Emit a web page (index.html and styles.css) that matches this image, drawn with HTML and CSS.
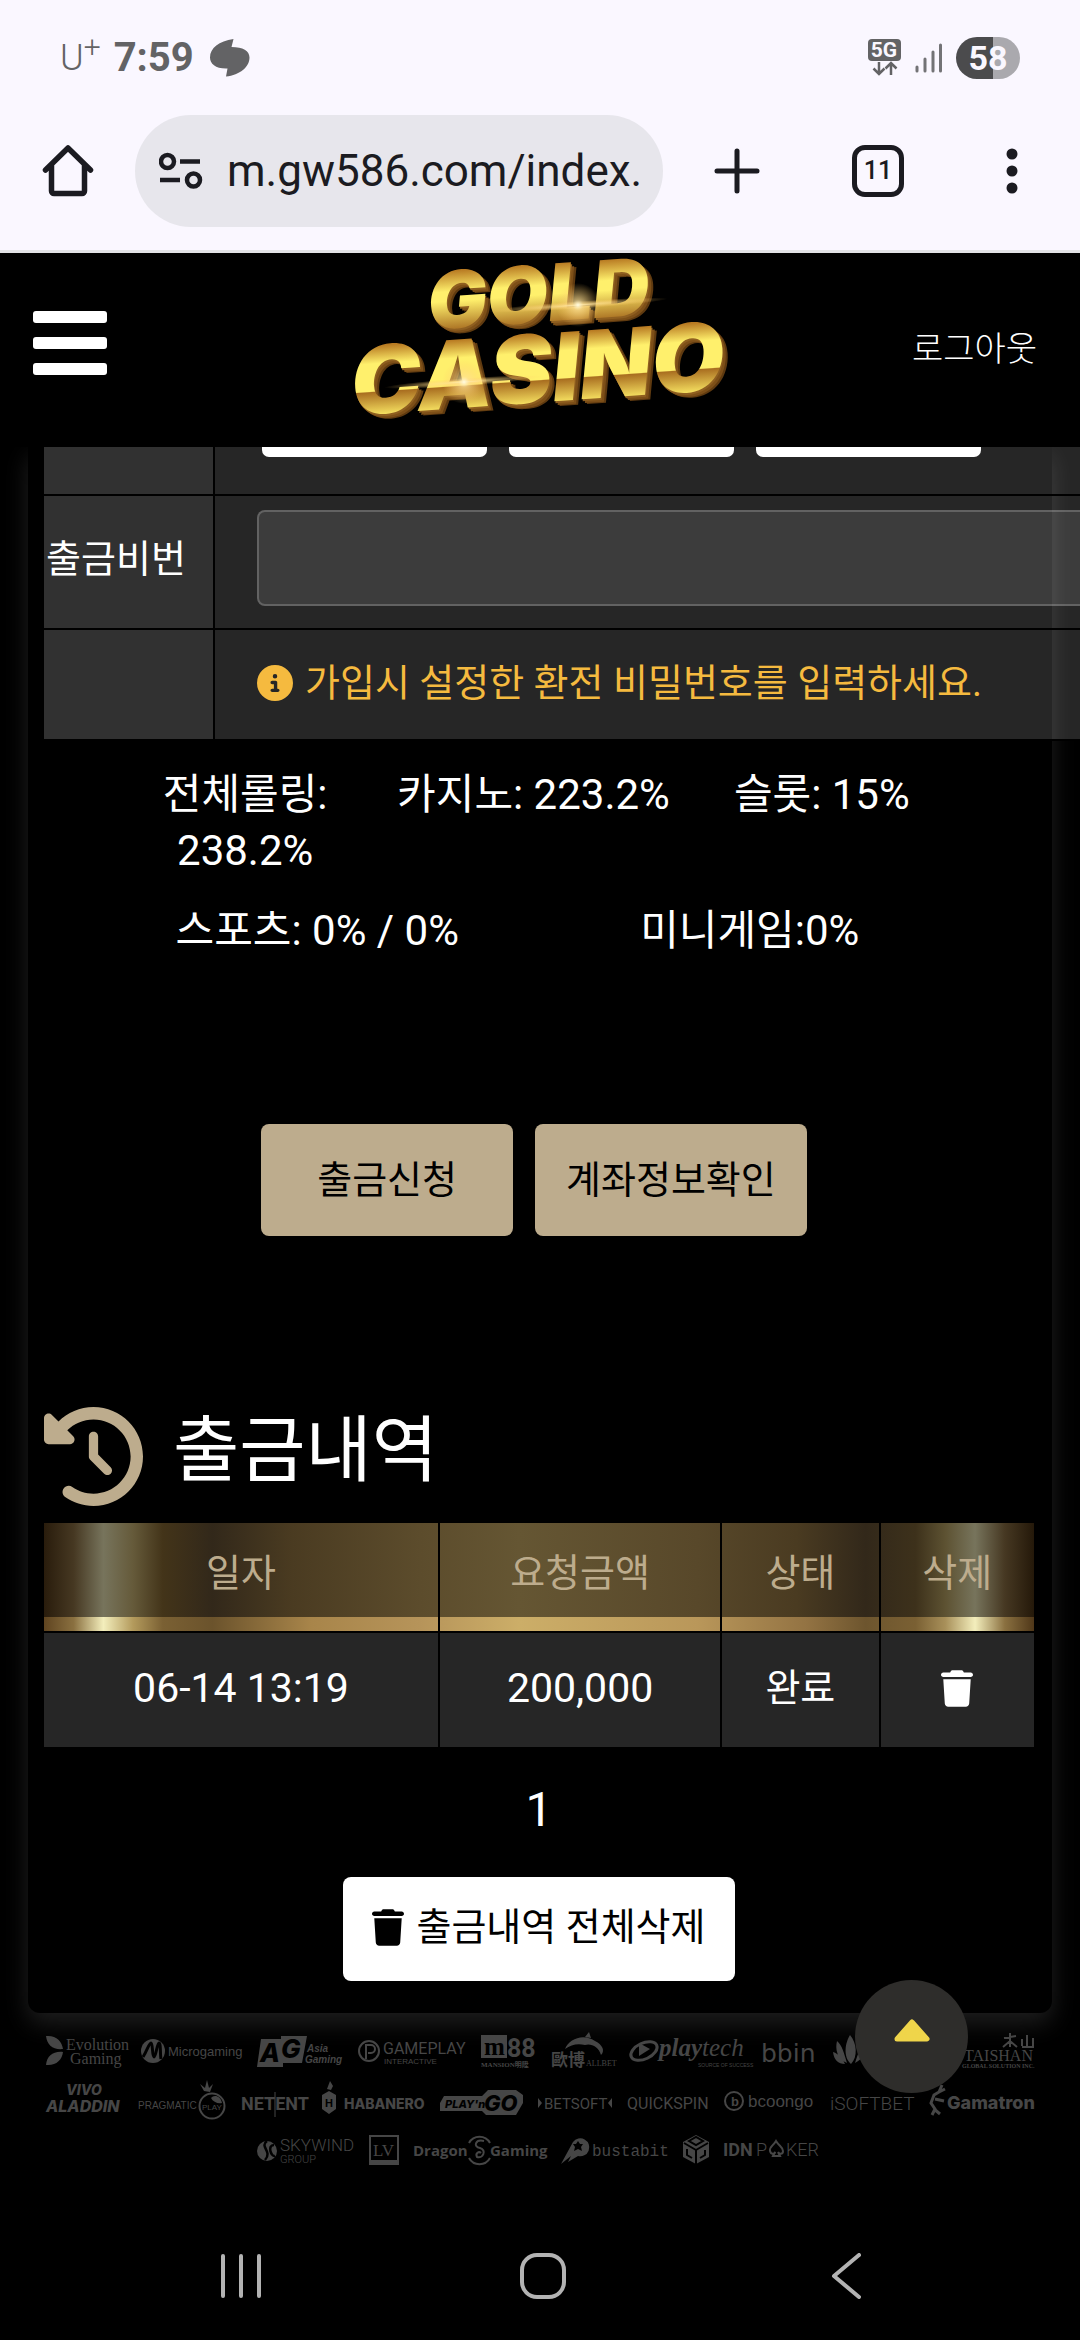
FILE: index.html
```html
<!DOCTYPE html>
<html lang="ko">
<head>
    <meta charset="UTF-8">
    <meta name="viewport" content="width=device-width, initial-scale=1.0">
    <title>GOLD CASINO</title>
    <link rel="stylesheet" href="styles.css">
</head>
<body>
    <!-- Status bar -->
    <div class="status-bar">
        <span class="carrier">U<sup>+</sup></span>
        <span class="clock">7:59</span>
        <svg class="status-app" width="40" height="38" viewBox="0 0 40 38"><path fill="#636365" d="M23.500 0L21.500 8C33 8 39.500 12 39.500 18.500C39.500 28 30 36 16 37.500L17.500 29.500C6 30 0 25 0 18.500C0 9 9 2 23.500 0Z"/></svg>
        <div class="status-right">
            <svg width="34" height="38" viewBox="0 0 34 38">
                <rect width="33" height="22" rx="4" fill="#636365"/>
                <text x="16" y="18" text-anchor="middle" class="net-label">5G</text>
                <path d="M11 23v12M5.500 29.500l5.500 5.500 5.500-5.500M23 36V24M17.500 29.500l5.500-5.500 5.500 5.500" fill="none" stroke="#636365" stroke-width="2.500"/>
            </svg>
            <svg width="28" height="30" viewBox="0 0 28 30"><path d="M2 24v4M10 16v12M18 9v19M25.500 2v26" stroke="#737376" stroke-width="3" stroke-linecap="round"/></svg>
            <span class="battery">58</span>
        </div>
    </div>

    <!-- Browser toolbar -->
    <div class="toolbar">
        <button class="tool-btn" aria-label="홈">
            <svg width="54" height="54" viewBox="0 0 54 54"><path d="M4.500 26L27 4l22.500 22M10.500 21v26a2.500 2.500 0 0 0 2.500 2.500h28a2.500 2.500 0 0 0 2.500-2.500V21" fill="none" stroke="#1b1b21" stroke-width="5.500" stroke-linejoin="round" stroke-linecap="round"/></svg>
        </button>
        <label class="omnibox">
            <svg width="44" height="38" viewBox="0 0 44 38" fill="none" stroke="#1b1b21" stroke-width="4.500"><circle cx="8.500" cy="9.500" r="6.500"/><path d="M21 9.500h20M1 28h20"/><circle cx="34.500" cy="28" r="6.500"/></svg>
            <input type="text" class="url" value="m.gw586.com/index." aria-label="주소">
        </label>
        <button class="tool-btn" aria-label="새 탭">
            <svg width="46" height="46" viewBox="0 0 46 46"><path d="M23 3v40M3 23h40" stroke="#1b1b21" stroke-width="5" stroke-linecap="round"/></svg>
        </button>
        <button class="tool-btn tabs">11</button>
        <button class="tool-btn" aria-label="메뉴">
            <svg width="12" height="46" viewBox="0 0 12 46" fill="#1b1b21"><circle cx="6" cy="6" r="5.500"/><circle cx="6" cy="23" r="5.500"/><circle cx="6" cy="40" r="5.500"/></svg>
        </button>
    </div>

    <!-- Site header -->
    <header class="site-header">
        <button class="menu-btn" aria-label="전체 메뉴"><i></i><i></i><i></i></button>
        <a href="#" class="logo">
            <svg width="376" height="168" viewBox="0 0 376 168">
                <defs>
                    <linearGradient id="gold1" x1="0" y1="0" x2="0" y2="1">
                        <stop offset=".2" stop-color="#b87a22"/>
                        <stop offset=".42" stop-color="#fff06c"/>
                        <stop offset=".52" stop-color="#fff06c"/>
                        <stop offset=".8" stop-color="#b07a28"/>
                    </linearGradient>
                    <linearGradient id="gold2" x1="0" y1="0" x2="0" y2="1">
                        <stop offset=".2" stop-color="#b87a22"/>
                        <stop offset=".36" stop-color="#fff06c"/>
                        <stop offset=".6" stop-color="#fff06c"/>
                        <stop offset=".61" stop-color="#a96e20"/>
                        <stop offset=".8" stop-color="#f3dc5e"/>
                    </linearGradient>
                    <radialGradient id="flare">
                        <stop offset="0" stop-color="#fffbe0"/>
                        <stop offset=".25" stop-color="#ffdf90" stop-opacity=".7"/>
                        <stop offset="1" stop-color="#ffc860" stop-opacity="0"/>
                    </radialGradient>
                </defs>
                <g class="logo-text" transform="rotate(-4)">
                    <g class="logo-top">
                        <text x="77" y="81" fill="#5f3a10">GOLD</text>
                        <text x="75" y="80" fill="#7d4f18">GOLD</text>
                        <text x="73" y="78" fill="#8f5f20">GOLD</text>
                        <text x="72" y="76" fill="url(#gold1)">GOLD</text>
                    </g>
                    <g class="logo-bottom">
                        <text x="-5" y="161" fill="#5f3a10">CASINO</text>
                        <text x="-7" y="160" fill="#7d4f18">CASINO</text>
                        <text x="-9" y="158" fill="#8f5f20">CASINO</text>
                        <text x="-10" y="156" fill="url(#gold2)">CASINO</text>
                    </g>
                </g>
                <g transform="rotate(-4 226 46)"><ellipse cx="226" cy="46" rx="90" ry="4" fill="url(#flare)"/><circle cx="226" cy="46" r="22" fill="url(#flare)"/></g>
                <g transform="rotate(-4 112 123)"><ellipse cx="112" cy="123" rx="80" ry="4" fill="url(#flare)"/><circle cx="112" cy="123" r="22" fill="url(#flare)"/></g>
            </svg>
        </a>
        <a href="#" class="logout">로그아웃</a>
    </header>

    <main class="panel">
        <div class="form-wrap">
            <table class="form-table">
                <tr class="row-amount">
                    <th></th>
                    <td>
                        <div class="amounts">
                            <button aria-label="10만"></button>
                            <button aria-label="50만"></button>
                            <button aria-label="100만"></button>
                        </div>
                    </td>
                </tr>
                <tr>
                    <th><label for="pin">출금비번</label></th>
                    <td><input type="password" id="pin" class="field"></td>
                </tr>
                <tr class="row-note">
                    <th></th>
                    <td>
                        <p class="note">
                            <svg width="36" height="36" viewBox="0 0 512 512" fill="currentColor"><path d="M256 512A256 256 0 1 0 256 0a256 256 0 1 0 0 512zM216 336h24V272H216c-13.300 0-24-10.700-24-24s10.700-24 24-24h48c13.300 0 24 10.700 24 24v88h8c13.300 0 24 10.700 24 24s-10.700 24-24 24H216c-13.300 0-24-10.700-24-24s10.700-24 24-24zm40-208a32 32 0 1 1 0 64 32 32 0 1 1 0-64z"/></svg>
                            가입시 설정한 환전 비밀번호를 입력하세요.
                        </p>
                    </td>
                </tr>
            </table>
        </div>

        <div class="rolling">
            <div class="rolling-row">
                <span>전체롤링: 238.2%</span>
                <span>카지노: 223.2%</span>
                <span>슬롯: 15%</span>
            </div>
            <div class="rolling-row">
                <span>스포츠: 0% / 0%</span>
                <span>미니게임:0%</span>
            </div>
        </div>

        <div class="actions">
            <button class="btn-gold btn-request">출금신청</button>
            <button class="btn-gold">계좌정보확인</button>
        </div>

        <h2 class="section-title">
            <svg width="99" height="99" viewBox="0 0 512 512" fill="#bdac8d"><path d="M75 75L41 41C25.900 25.900 0 36.600 0 57.900V168c0 13.300 10.700 24 24 24H134.100c21.400 0 32.100-25.900 17-41l-30.800-30.800C155 85.500 203 64 256 64c106 0 192 86 192 192s-86 192-192 192c-40.800 0-78.600-12.700-109.700-34.400c-14.500-10.100-34.400-6.600-44.600 7.900s-6.600 34.400 7.900 44.600C151.200 495 201.700 512 256 512c141.400 0 256-114.600 256-256S397.400 0 256 0C185.300 0 121.300 28.700 75 75zm181 53c-13.300 0-24 10.700-24 24V256c0 6.400 2.500 12.500 7 17l72 72c9.400 9.400 24.600 9.400 33.900 0s9.400-24.600 0-33.900l-65-65V152c0-13.300-10.700-24-24-24z"/></svg>
            출금내역
        </h2>

        <table class="history">
            <colgroup><col class="c-date"><col class="c-amount"><col class="c-state"><col class="c-del"></colgroup>
            <thead>
                <tr><th>일자</th><th>요청금액</th><th>상태</th><th>삭제</th></tr>
            </thead>
            <tbody>
                <tr>
                    <td class="num">06-14 13:19</td>
                    <td class="num">200,000</td>
                    <td>완료</td>
                    <td>
                        <button class="icon-btn" aria-label="삭제">
                            <svg width="32" height="37" viewBox="0 0 448 512" fill="currentColor"><path d="M135.200 17.700L128 32H32C14.300 32 0 46.300 0 64S14.300 96 32 96H416c17.700 0 32-14.300 32-32s-14.300-32-32-32H320l-7.200-14.300C307.400 6.800 296.300 0 284.200 0H163.800c-12.100 0-23.200 6.800-28.600 17.700zM416 128H32L53.200 467c1.600 25.300 22.600 45 47.900 45H346.900c25.300 0 46.300-19.700 47.900-45L416 128z"/></svg>
                        </button>
                    </td>
                </tr>
            </tbody>
        </table>

        <a href="#" class="page">1</a>

        <button class="btn-clear">
            <svg width="32" height="37" viewBox="0 0 448 512" fill="currentColor"><path d="M135.200 17.700L128 32H32C14.300 32 0 46.300 0 64S14.300 96 32 96H416c17.700 0 32-14.300 32-32s-14.300-32-32-32H320l-7.200-14.300C307.400 6.800 296.300 0 284.200 0H163.800c-12.100 0-23.200 6.800-28.600 17.700zM416 128H32L53.200 467c1.600 25.300 22.600 45 47.900 45H346.900c25.300 0 46.300-19.700 47.900-45L416 128z"/></svg>
            출금내역 전체삭제
        </button>
    </main>

    <!-- Partner logos -->
    <footer class="partners">
        <div class="partner-row">
            <svg width="80" height="38" viewBox="0 0 80 38"><path d="M0 3C10 2 16 8 17 16C7 17 1 12 0 3ZM0 32C1 23 7 18 17 19C16 27 10 33 0 32Z"/><g class="serif"><text x="20" y="17" font-size="16">Evolution</text><text x="24" y="31" font-size="16">Gaming</text></g></svg>
            <svg width="100" height="38" viewBox="0 0 100 38"><circle cx="12" cy="18" r="12"/><path d="M2 24C6 18 8 10 10 10S11 24 13 24S16 10 18 10S19 22 20 26" fill="none" stroke="#000" stroke-width="3"/><text x="27" y="23" font-size="13">Microgaming</text></svg>
            <svg width="86" height="38" viewBox="0 0 86 38"><path d="M4 6h20v-3h26L45 30H26v4H0Z"/><g class="heavy ital"><text x="3" y="29" font-size="26" fill="#000">A</text><text x="24" y="25" font-size="26" fill="#000">G</text></g><g class="ital bold" font-size="10"><text x="50" y="19">Asia</text><text x="48" y="30">Gaming</text></g></svg>
            <svg width="108" height="38" viewBox="0 0 108 38"><circle cx="11" cy="18" r="10" fill="none" stroke="currentColor" stroke-width="2"/><path d="M8 26V12H13A4 4 0 0 1 13 20H10" fill="none" stroke="currentColor" stroke-width="2"/><text x="25" y="21" font-size="16" class="roboto">GAMEPLAY</text><text x="26" y="31" font-size="8">INTERACTIVE</text></svg>
            <svg width="54" height="38" viewBox="0 0 54 38"><path d="M0 2h26v23H0Z"/><text x="3" y="22" font-size="25" class="serif bold" fill="#000">m</text><text x="26" y="24" font-size="25" class="roboto bold">88</text><text x="0" y="34" font-size="7" class="serif bold">MANSION明陞</text></svg>
            <svg width="64" height="38" viewBox="0 0 64 38"><path d="M14 16C18 6 32 0 44 8C52 12 54 18 50 22C48 14 40 10 34 12C26 10 20 12 14 16ZM34 4L38 -1L40 5Z"/><text x="0" y="33" font-size="17" class="bold">歐博</text><text x="35" y="33" font-size="8" class="serif">ALLBET</text></svg>
            <svg width="116" height="38" viewBox="0 0 116 38"><ellipse cx="14" cy="18" rx="14" ry="8" transform="rotate(-25 14 18)" fill="none" stroke="currentColor" stroke-width="3"/><path d="M9 10L20 16L9 23Z"/><g class="serif ital" font-size="25"><text x="29" y="23" class="bold">play</text><text x="72" y="23" class="slim">tech</text></g><text x="68" y="34" font-size="5">SOURCE OF SUCCESS</text></svg>
            <svg width="56" height="38" viewBox="0 0 56 38"><text x="0" y="29" font-size="25" class="deja">bbin</text></svg>
            <svg width="114" height="38" viewBox="0 0 114 38"><path d="M18 31C10 24 12 10 17 2C24 10 25 24 18 31ZM14 30C4 26 2 16 4 8C9 12 11 20 14 30ZM12 31C5 31 1 27 0 19C6 21 9 25 12 31ZM22 30C24 24 26 16 33 8C35 18 30 26 22 30Z"/></svg>
            <svg width="72" height="38" viewBox="0 0 72 38"><path d="M42 5L54 3M48 0V14M41 14L48 8L55 14M60 6V13M65 2V13M71 5V14H60" fill="none" stroke="currentColor" stroke-width="2"/><text x="2" y="28" font-size="16" class="serif">TAISHAN</text><text x="0" y="35" font-size="6" class="serif bold">GLOBAL SOLUTION INC.</text></svg>
        </div>
        <div class="partner-row">
            <svg width="82" height="38" viewBox="0 0 82 38"><g class="heavy ital"><text x="20" y="14" font-size="14">VIVO</text><text x="0" y="31" font-size="16">ALADDIN</text></g></svg>
            <svg width="84" height="38" viewBox="0 0 84 38"><text x="-4" y="28" font-size="10">PRAGMATIC</text><circle cx="70" cy="25" r="12.500" fill="none" stroke="currentColor" stroke-width="2"/><path d="M62 10L58 3L63 7L65 -1L67 7L71 3L68 11ZM69 17C72 13 79 15 80 22C76 23 71 21 69 17Z"/><text x="60" y="29" font-size="8">PLAY</text></svg>
            <svg width="67" height="38" viewBox="0 0 67 38"><text x="0" y="29" font-size="18" class="roboto bold">NETENT</text><path d="M34 11V36" stroke="currentColor"/></svg>
            <svg width="103" height="38" viewBox="0 0 103 38"><path d="M7 10L14 14V28L7 33L0 28V14ZM5 8L8 0L11 5L9 9Z"/><text x="3" y="26" font-size="11" class="bold" fill="#000">H</text><text x="22" y="28" font-size="14" class="heavy">HABANERO</text></svg>
            <svg width="84" height="38" viewBox="0 0 84 38"><path d="M4 15H42L48 9H76L83 14V22L76 34H46L42 30H0V22Z"/><g class="heavy ital" fill="#000"><text x="5" y="27" font-size="11">PLAY'n</text><text x="44" y="30" font-size="22">GO</text></g></svg>
            <svg width="74" height="38" viewBox="0 0 74 38"><path d="M0 17L4 22L0 27ZM74 17L70 22L74 27Z"/><text x="6" y="28" font-size="15" class="cond">BETSOFT</text></svg>
            <svg width="84" height="38" viewBox="0 0 84 38"><text x="0" y="28" font-size="16" class="cond">QUICKSPIN</text></svg>
            <svg width="90" height="38" viewBox="0 0 90 38"><circle cx="9" cy="20" r="9" fill="none" stroke="currentColor" stroke-width="2"/><text x="6" y="25" font-size="13" class="bold">b</text><text x="23" y="26" font-size="17">bcoongo</text></svg>
            <svg width="86" height="38" viewBox="0 0 86 38"><text x="0" y="29" font-size="19" class="cond slim">iSOFTBET</text></svg>
            <svg width="104" height="38" viewBox="0 0 104 38"><path d="M12 4L9 11L4 14L1 22L5 28L2 34M9 11L15 8M5 18L14 20M4 28L10 33" fill="none" stroke="currentColor" stroke-width="3"/><text x="17" y="28" font-size="18" class="heavy">Gamatron</text></svg>
        </div>
        <div class="partner-row partner-last">
            <svg width="98" height="38" viewBox="0 0 98 38"><circle cx="10" cy="22" r="10"/><path d="M10 12C2 18 16 22 8 31M17 16C10 16 14 28 18 27" fill="none" stroke="#000" stroke-width="2.500"/><text x="23" y="22" font-size="17" class="roboto slim">SKYWIND</text><text x="23" y="34" font-size="11" class="roboto slim">GROUP</text></svg>
            <svg width="30" height="38" viewBox="0 0 30 38"><rect x="1" y="7" width="28" height="28" fill="none" stroke="currentColor" stroke-width="2"/><text x="4" y="27" font-size="17" class="serif">LV</text><path d="M1 31h28v4H1Z"/></svg>
            <svg width="134" height="38" viewBox="0 0 134 38"><g class="bold open" font-size="15"><text x="0" y="27">Dragon</text><text x="77" y="27">Gaming</text></g><path d="M56 14A12 12 0 0 1 77 14M56 29A12 12 0 0 0 77 29M71 12C62 10 60 18 67 19C74 21 70 30 64 28C62 24 66 22 68 24" fill="none" stroke="currentColor" stroke-width="2"/></svg>
            <svg width="108" height="38" viewBox="0 0 108 38"><path d="M0 35L12 13A9 9 0 1 1 17 27L7 33L10 27Z"/><path d="M17 12l2 3 3 0-2 3 1 4-4-2-4 2 1-4-2-3 3 0z" fill="#000"/><text x="31" y="27" font-size="16" class="mono">bustabit</text></svg>
            <svg width="26" height="38" viewBox="0 0 26 38"><path d="M13 6L26 13V28L13 35L0 28V13Z"/><path d="M13 21L25 14M13 21L1 14M13 21V35M6 12L13 8L20 12L13 16ZM4 20V26L9 29M17 29L22 26V21" fill="none" stroke="#000" stroke-width="2"/></svg>
            <svg width="100" height="38" viewBox="0 0 100 38"><g font-size="18" class="roboto"><text x="0" y="27" class="bold">IDN</text><text x="33" y="27" class="slim">P</text><text x="63" y="27" class="slim">KER</text></g><path d="M53 12C50 17 46 18 47 22C48 26 52 25 52 23L50 27H57L55 23C56 25 60 26 60 22C60 18 56 17 53 12Z" fill="none" stroke="currentColor" stroke-width="2"/></svg>
        </div>
    </footer>

    <button class="to-top" aria-label="맨 위로">
        <svg width="36" height="24" viewBox="0 0 36 24"><path d="M18 3L33 20H3Z" fill="#efd54a" stroke="#efd54a" stroke-width="5" stroke-linejoin="round"/></svg>
    </button>

    <!-- System navigation -->
    <nav class="sys-nav">
        <button aria-label="최근 앱"><svg width="42" height="44" viewBox="0 0 42 44"><path d="M3 2v40M21 2v40M39 2v40" stroke="#b3b3b3" stroke-width="4" stroke-linecap="round"/></svg></button>
        <button aria-label="홈 화면"><svg width="46" height="46" viewBox="0 0 46 46"><rect x="2" y="2" width="42" height="42" rx="15" fill="none" stroke="#b3b3b3" stroke-width="4"/></svg></button>
        <button aria-label="뒤로"><svg width="30" height="46" viewBox="0 0 30 46"><path d="M28 2L3 23l25 21" fill="none" stroke="#b3b3b3" stroke-width="4" stroke-linejoin="round" stroke-linecap="round"/></svg></button>
    </nav>
</body>
</html>
```

FILE: styles.css
```css
* {
    box-sizing: border-box;
}
body {
    margin: 0;
    min-height: 100vh;
    display: flex;
    flex-direction: column;
    background: #000;
    color: #fff;
    font-family: Roboto, "Noto Sans CJK KR", sans-serif;
    font-size: 38px;
    line-height: 56px;
}
button {
    border: none;
    padding: 0;
    background: none;
    color: inherit;
    font: inherit;
    cursor: pointer;
}
a {
    color: inherit;
    text-decoration: none;
}
svg {
    display: block;
    flex: none;
}

/* status bar */
.status-bar {
    display: flex;
    align-items: center;
    height: 100px;
    padding: 16px 60px 0 60px;
    background: #faf7ff;
    color: #636365;
}
.carrier {
    font-size: 36px;
    font-weight: 300;
    line-height: 40px;
}
.carrier sup {
    font-size: 30px;
    line-height: 0;
}
.clock {
    margin-left: 13px;
    font-size: 40px;
    font-weight: 700;
    line-height: 40px;
}
.status-app {
    margin-left: 16px;
}
.status-right {
    display: flex;
    align-items: center;
    gap: 13px;
    margin-left: auto;
}
.net-label {
    fill: #faf7ff;
    font-size: 21px;
    font-weight: 700;
}
.battery {
    width: 64px;
    height: 42px;
    border-radius: 21px;
    background: linear-gradient(90deg, #4b4b4d 58%, #aaa9ae 58%);
    color: #faf7ff;
    font-size: 34px;
    font-weight: 700;
    line-height: 42px;
    text-align: center;
}

/* browser toolbar */
.toolbar {
    display: flex;
    align-items: center;
    height: 153px;
    padding: 0 62px 8px 41px;
    background: #faf7ff;
    border-bottom: 3px solid #e3e2e6;
    color: #1b1b21;
}
.tool-btn {
    flex: none;
}
.omnibox {
    display: flex;
    flex: 1;
    align-items: center;
    gap: 24px;
    min-width: 0;
    height: 112px;
    margin: 0 51px 0 40px;
    padding: 0 8px 0 24px;
    border-radius: 56px;
    background: #e7e6ec;
}
.url {
    flex: 1;
    min-width: 0;
    padding: 0;
    border: none;
    outline: none;
    background: none;
    color: #1b1b21;
    font-family: Roboto, sans-serif;
    font-size: 44px;
}
.tabs {
    width: 52px;
    height: 52px;
    margin: 0 102px 0 92px;
    border: 5px solid #1b1b21;
    border-radius: 13px;
    font-size: 25px;
    font-weight: 500;
    line-height: 42px;
}

/* site header */
.site-header {
    position: relative;
    z-index: 1;
    display: grid;
    grid-template-columns: 1fr auto 1fr;
    align-items: center;
    height: 194px;
    padding: 0 33px 14px;
    background: #000;
}
.menu-btn {
    display: grid;
    gap: 14px;
    width: 74px;
}
.menu-btn i {
    height: 12px;
    border-radius: 3px;
    background: #fff;
}
.logo svg {
    overflow: visible;
}
.logo-text {
    font-family: Inter, sans-serif;
    font-weight: 900;
    font-style: italic;
}
.logo-top {
    font-size: 79px;
}
.logo-bottom {
    font-size: 94px;
}
.logout {
    padding: 12px 10px 0 0;
    font-size: 34px;
    font-weight: 300;
    text-align: right;
}

/* content panel */
.panel {
    margin: 0 28px;
    padding: 0 18px 32px 16px;
    border-radius: 0 0 12px 12px;
    box-shadow: 0 10px 24px rgba(255, 255, 255, .12);
}
.form-wrap {
    margin-right: -46px;
    overflow: hidden;
}
.form-table {
    width: 110%;
    border-spacing: 0;
    table-layout: fixed;
}
.form-table th,
.form-table td {
    padding: 0;
    border-bottom: 2px solid #000;
    text-align: left;
    font-weight: 400;
}
.form-table th {
    width: 171px;
    border-right: 2px solid #000;
    background: #313131;
}
.form-table label {
    display: block;
    padding: 0 0 6px 2px;
}
.form-table td {
    padding-left: 42px;
    background: rgba(255, 255, 255, .15);
}
.row-amount {
    height: 49px;
    vertical-align: top;
}
.row-note {
    height: 111px;
}
.amounts {
    display: flex;
    gap: 22px;
    padding-left: 5px;
}
.amounts button {
    width: 225px;
    height: 10px;
    border-radius: 0 0 7px 7px;
    background: #fff;
}
.field {
    display: block;
    width: 100%;
    height: 96px;
    margin: 14px 0 22px;
    padding: 0 20px;
    border: 2px solid rgba(255, 255, 255, .2);
    border-radius: 8px;
    background: rgba(255, 255, 255, .1);
    color: #fff;
    font-size: 38px;
}
.note {
    display: flex;
    align-items: center;
    gap: 12px;
    margin: 0;
    padding-bottom: 4px;
    color: #f5ba3f;
}

.rolling {
    display: grid;
    gap: 24px;
    margin: 26px 68px 0 57px;
    font-size: 42px;
    text-align: center;
}
.rolling-row {
    display: flex;
}
.rolling-row span {
    flex: 1 1 0;
}

.actions {
    display: flex;
    justify-content: center;
    gap: 22px;
    margin: 165px 10px 0 0;
}
.btn-gold {
    height: 112px;
    padding: 0 31px;
    border-radius: 8px;
    background: #bdac8d;
    color: #000;
}
.btn-request {
    padding: 0 56px;
}

.section-title {
    display: flex;
    align-items: flex-start;
    gap: 30px;
    margin: 171px 0 17px;
    font-size: 72px;
    font-weight: 400;
    line-height: 88px;
}

.history {
    width: 100%;
    border-spacing: 0;
    table-layout: fixed;
    text-align: center;
}
.c-date { width: 40%; }
.c-amount { width: 28.5%; }
.c-state { width: 16%; }
.c-del { width: 15.5%; }
.history thead tr {
    background:
        linear-gradient(90deg, #5f4420, #8a7040 3%, #f3eebc 6%, #b39a5c 9%, #7a6033 12%, #6b532c 17%, #a8854a 27%, #b6945a 38%, #ccae68 48%, #b9975a 66%, #937343 77%, #6d552e 83%, #7a6033 88%, #a8905a 91%, #f3eebc 94%, #8a7040 97%, #4e3618) 0 94px / 100% 14px no-repeat,
        linear-gradient(90deg, #291c0c, #463822 3%, #77745c 6%, #655a3a 9%, #433419 12%, #32281a 17%, #4a3b21 25%, #5c4c2c 38%, #655633 48%, #58482a 66%, #4a3b21 76%, #32281a 83%, #3d311b 88%, #5d5232 91%, #77745c 94%, #463822 97%, #241809);
}
.history th {
    height: 110px;
    padding: 0 0 8px;
    border-right: 2px solid #000;
    border-bottom: 2px solid #000;
    color: #bdac8d;
    font-weight: 400;
}
.history td {
    height: 114px;
    padding: 0 0 4px;
    border-right: 2px solid #000;
    background: #262626;
}
.history th:last-child,
.history td:last-child {
    border-right: none;
}
.history .num {
    font-size: 41px;
}
.icon-btn {
    display: block;
    margin: 0 auto;
}

.page {
    display: block;
    width: 64px;
    margin: 31px auto 35px;
    font-size: 48px;
    line-height: 64px;
    text-align: center;
}
.btn-clear {
    display: flex;
    align-items: center;
    gap: 12px;
    height: 104px;
    margin: 0 auto;
    padding: 0 29px 4px;
    border-radius: 8px;
    background: #fff;
    color: #000;
}

/* partner logos */
.partners {
    display: grid;
    gap: 10px;
    padding: 20px 46px 0;
    color: #464646;
    font-family: "Liberation Sans", "Noto Sans CJK TC", sans-serif;
}
.partner-row {
    display: flex;
    justify-content: space-between;
    height: 38px;
}
.partner-last {
    justify-content: center;
    gap: 14px;
}
.partners svg {
    fill: currentColor;
    overflow: visible;
}
.serif { font-family: "Liberation Serif", "Noto Sans CJK TC", serif; }
.mono { font-family: "Liberation Mono", monospace; }
.roboto { font-family: Roboto, sans-serif; }
.open { font-family: "Open Sans", sans-serif; }
.deja { font-family: "DejaVu Sans", sans-serif; }
.cond { font-family: "Liberation Sans Narrow", Roboto, sans-serif; }
.heavy { font-family: Inter, sans-serif; font-weight: 800; }
.bold { font-weight: 700; }
.slim { font-weight: 300; }
.ital { font-style: italic; }

.to-top {
    position: fixed;
    right: 112px;
    bottom: 247px;
    z-index: 2;
    display: grid;
    place-items: center;
    width: 113px;
    height: 113px;
    padding-bottom: 12px;
    border-radius: 50%;
    background: #2e2d2b;
}

/* system navigation */
.sys-nav {
    display: grid;
    grid-template-columns: repeat(3, 1fr);
    height: 128px;
    margin-top: auto;
    padding: 0 83px 0 90px;
}
.sys-nav button {
    display: grid;
    place-items: center;
}
```
